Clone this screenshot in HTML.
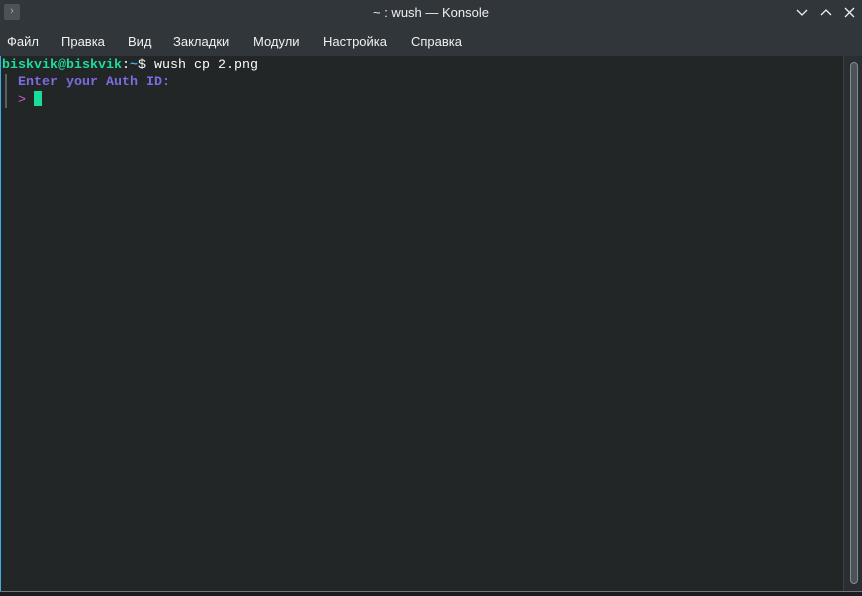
<!DOCTYPE html>
<html><head><meta charset="utf-8"><style>
body{margin:0;width:862px;height:595px;overflow:hidden;background:#31363b;font-family:"Liberation Sans","DejaVu Sans",sans-serif;position:relative}
.title{position:absolute;top:0;left:0;width:862px;height:26px;background:#31363b;color:#eff0f1;font-size:13px;text-align:center;line-height:26px}
.menu{position:absolute;top:26px;left:0;width:862px;height:30px;background:#31363b;color:#eff0f1;font-size:13px}
.menu span{position:absolute;top:8px}
.term{position:absolute;top:56px;left:0;width:843px;height:535px;background:#232627;border-left:1px solid #3daee9;box-sizing:border-box}
.sb{position:absolute;top:56px;left:843px;width:19px;height:535px;background:#2a2e32;border-left:1px solid #3a3f44;box-sizing:border-box}
.sb div{position:absolute;left:6px;top:6px;width:8px;height:522px;border-radius:4px;background:#4d5257;border:1px solid #7f8c8d;box-sizing:border-box}
.bot{position:absolute;top:591px;left:0;width:862px;height:4px;background:#1b1e20;border-top:1px solid #777}
pre{margin:0;position:absolute;left:2px;top:57px;font-family:"Liberation Mono","DejaVu Sans Mono",monospace;font-size:13.33px;line-height:17px;color:#fcfcfc}
.g{color:#1cdc9a;font-weight:bold}.b{color:#3daee9;font-weight:bold}.p{color:#7d6be0;font-weight:bold}.m{color:#d45dcc}
.bar{position:absolute;left:5px;top:74px;width:2px;height:34px;background:#5a5f64}
.cur{display:inline-block;width:8px;height:15px;background:#1cdc9a;vertical-align:-3px}
</style></head><body>
<div class="title">~ : wush — Konsole</div>
<div style="position:absolute;left:4px;top:4px;width:16px;height:16px;background:#4d5257;border-radius:2px;color:#aaa;font-size:11px;line-height:15px;text-align:center">›</div>
<svg style="position:absolute;left:795px;top:6px" width="60" height="14" viewBox="0 0 60 14" fill="none" stroke="#eff0f1" stroke-width="1.3"><path d="M2 4 L7 9 L12 4"/><path d="M26 9 L31 4 L36 9"/><path d="M50 2 L59 11 M59 2 L50 11"/></svg>
<div class="menu"><span style="left:7px">Файл</span><span style="left:61px">Правка</span><span style="left:128px">Вид</span><span style="left:173px">Закладки</span><span style="left:253px">Модули</span><span style="left:323px">Настройка</span><span style="left:411px">Справка</span></div>
<div class="term"></div>
<div class="bar"></div>
<pre><span class="g">biskvik@biskvik</span>:<span class="b">~</span>$ wush cp 2.png
  <span class="p">Enter your Auth ID:</span>
  <span class="m">&gt;</span> <span class="cur"></span></pre>
<div class="sb"><div></div></div>
<div class="bot"></div>
</body></html>
